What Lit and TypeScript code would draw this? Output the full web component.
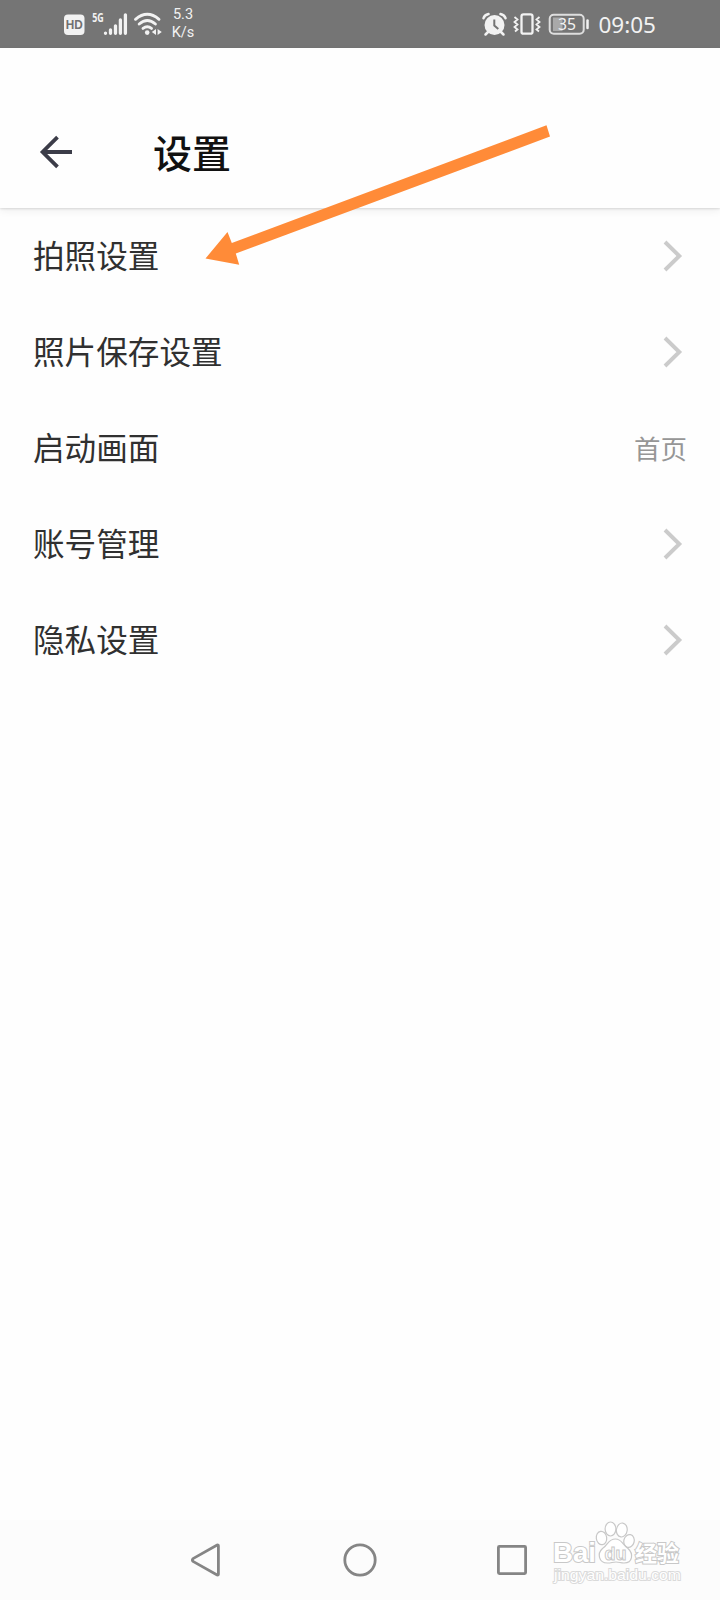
import { LitElement, html, css } from "lit";
import { customElement, property } from "lit/decorators.js";

interface Item {
  label: string;
  value?: string;
}

const ITEMS: Item[] = [
  { label: "拍照设置" },
  { label: "照片保存设置" },
  { label: "启动画面", value: "首页" },
  { label: "账号管理" },
  { label: "隐私设置" },
];

@customElement("status-bar")
class StatusBar extends LitElement {
  static styles = css`
    :host {
      display: flex;
      justify-content: space-between;
      height: 48px;
      box-sizing: border-box;
      padding: 0 64px 0 64px;
      background: #757575;
      color: #f2f2f2;
    }
    .group {
      display: flex;
      align-items: center;
    }
    svg {
      display: block;
    }
    .speed {
      display: flex;
      flex-direction: column;
      align-items: center;
      margin-left: 9px;
      width: 24px;
      font: 14.5px/18px Roboto, sans-serif;
    }
    .time {
      margin-left: 8px;
      font: 22.5px/48px "Noto Sans", sans-serif;
      padding-top: 2px;
    }
    .hd {
      font: 700 12.5px "Liberation Sans", sans-serif;
    }
    .net {
      font: 700 12.5px "Open Sans", sans-serif;
    }
    .level {
      font: 17px "Noto Sans", sans-serif;
    }
  `;
  render() {
    return html`
      <div class="group">
        <svg width="98" height="48" viewBox="64 0 98 48" fill="#f2f2f2">
          <rect x="64" y="14.5" width="20.5" height="20.5" rx="4" />
          <text class="hd" x="65.8" y="29.3" fill="#707070" textLength="17" lengthAdjust="spacingAndGlyphs">HD</text>
          <text class="net" x="92.3" y="22.3" textLength="11.5" lengthAdjust="spacingAndGlyphs">5G</text>
          <g stroke="#f2f2f2" stroke-width="3.3" stroke-linecap="round">
            <path d="M105.5 33.1v.2M110.5 30v3.3M115.500 25.800v7.500M120.400 20v13.300M125.400 14.800v18.500" />
          </g>
          <g fill="none" stroke="#f2f2f2" stroke-width="2.900" stroke-linecap="round">
            <path d="M135.500 19.300Q147.300 9.300 159 19.300M139.200 24Q147.300 17.200 155.400 24M143 28.400Q147.300 25.200 151.500 28.400" />
          </g>
          <circle cx="147.200" cy="32.600" r="2.300" />
          <path d="M156 29v6l-4.200-3zM157.600 29v6l4.200-3z" />
        </svg>
        <div class="speed"><span>5.3</span><span>K/s</span></div>
      </div>
      <div class="group">
        <svg width="108" height="48" viewBox="482 0 108 48" fill="none" stroke="#f2f2f2">
          <circle cx="494.500" cy="25" r="10" fill="#f2f2f2" stroke="none" />
          <path d="M483.500 18.200Q484.400 14.800 488.500 14M500.500 14Q504.500 14.800 505.500 18.200" stroke-width="2.500" stroke-linecap="round" />
          <path d="M488 32l-2.500 2.500M501 32l2.500 2.500" stroke-width="2.500" stroke-linecap="round" />
          <path d="M494.300 19.500v6l4 3.500" stroke="#757575" stroke-width="2" />
          <rect x="521.500" y="14.300" width="11" height="19.400" rx="2" stroke-width="2.300" />
          <path d="M514.500 17l3 2.500-3 2.500 3 2.500-3 2.500 3 2.500-2.500 2M539.500 17l-3 2.500 3 2.500-3 2.500 3 2.500-3 2.500 2.500 2" stroke-width="1.800" />
          <rect x="549.700" y="14.800" width="34" height="19" rx="4" stroke="#dedede" stroke-width="2" />
          <path d="M553 17.500h9.500v13.600h-9.500z" fill="#a9a9a9" stroke="none" />
          <path d="M587.500 20.500v7.500" stroke-width="2.500" stroke-linecap="round" />
          <text class="level" x="558" y="30.200" textLength="18" lengthAdjust="spacingAndGlyphs" fill="#f2f2f2" stroke="none">35</text>
        </svg>
        <span class="time">09:05</span>
      </div>
    `;
  }
}

@customElement("setting-row")
class SettingRow extends LitElement {
  @property() label = "";
  @property() value = "";
  static styles = css`
    :host {
      display: flex;
      align-items: center;
      justify-content: space-between;
      height: 96px;
      box-sizing: border-box;
      padding: 0 33px;
      font-family: "KaiTi", "STKaiti", "Noto Sans CJK SC", sans-serif;
    }
    .label {
      font-size: 31.6px;
      line-height: 48px;
      padding-bottom: 4px;
      color: #303030;
    }
    .value {
      font-size: 26.5px;
      line-height: 40px;
      color: #969696;
    }
    .chevron {
      display: block;
      margin-right: 4px;
    }
  `;
  render() {
    return html`
      <span class="label">${this.label}</span>
      ${this.value
        ? html`<span class="value">${this.value}</span>`
        : html`<svg class="chevron" width="20" height="32" viewBox="0 0 20 32" fill="none" stroke="#cbcbcb" stroke-width="3.900">
            <path d="M2 2 16.300 16 2 30" />
          </svg>`}
    `;
  }
}

@customElement("nav-bar")
class NavBar extends LitElement {
  static styles = css`
    :host {
      display: flex;
      align-items: center;
      height: 80px;
      box-sizing: border-box;
      padding-left: 190px;
      background: #fcfcfc;
    }
    .key {
      display: block;
      fill: none;
      stroke: #858585;
      stroke-width: 2.8;
      stroke-linejoin: round;
      margin-right: 118px;
    }
    .key.last {
      margin-right: 20px;
    }
    .mark {
      display: block;
      fill: #fff;
      stroke: #c8c8c8;
      stroke-width: 1.2;
    }
    .brand {
      font: 700 28px "Liberation Sans", sans-serif;
      paint-order: stroke;
      stroke-width: 2;
    }
    .cjk {
      font: 700 22px "Noto Sans CJK SC", sans-serif;
      paint-order: stroke;
      stroke-width: 2;
    }
    .du {
      font: 700 19px "Liberation Sans", sans-serif;
      stroke-width: 1;
    }
    .site {
      font: 14px "Liberation Sans", sans-serif;
      paint-order: stroke;
      stroke-width: 1.8;
      stroke: #dadada;
    }
  `;
  render() {
    return html`
      <svg class="key" width="34" height="40" viewBox="190 1540 34 40">
        <path d="M193 1558.600 217.200 1545q1.200-.4 1.200 1v28q0 1.400-1.200 1L193 1561.400q-1.200-1.400 0-2.800z" />
      </svg>
      <svg class="key" width="36" height="40" viewBox="342 1540 36 40">
        <circle cx="360" cy="1560" r="15.200" />
      </svg>
      <svg class="key last" width="34" height="40" viewBox="496 1540 34 40">
        <rect x="498.400" y="1546.400" width="27.200" height="27.200" rx="1" />
      </svg>
      <svg class="mark" width="140" height="80" viewBox="550 1520 140 80">
        <text class="brand" x="553" y="1561.500" textLength="43" lengthAdjust="spacingAndGlyphs">Bai</text>
        <ellipse cx="601.500" cy="1538" rx="5.200" ry="6.700" transform="rotate(-8 601.500 1538)" />
        <ellipse cx="610.500" cy="1529" rx="5.400" ry="7" />
        <ellipse cx="621.800" cy="1530" rx="5.400" ry="7" transform="rotate(8 621.800 1530)" />
        <ellipse cx="629" cy="1541" rx="5.200" ry="6.500" transform="rotate(14 629 1541)" />
        <path d="M615.500 1539c-7.500 0-7 5.500-13 9.500-5.500 5-4 14.500 5 14.500 4 0 5-1 8.500-1s4.500 1 8 1c9 0 9.500-9.500 4-14.500-6-4-6-9.500-12.500-9.500z" />
        <text class="du" x="604.500" y="1560" textLength="22" lengthAdjust="spacingAndGlyphs">du</text>
        <text class="cjk" x="635" y="1560.500" textLength="44" lengthAdjust="spacingAndGlyphs">经验</text>
        <text class="site" x="554" y="1579.500" textLength="127" lengthAdjust="spacingAndGlyphs">jingyan.baidu.com</text>
      </svg>
    `;
  }
}

@customElement("app-root")
class AppRoot extends LitElement {
  static styles = css`
    :host {
      display: flex;
      flex-direction: column;
      position: relative;
      width: 720px;
      height: 1600px;
      overflow: hidden;
      background: #fefefe;
    }
    .header {
      display: flex;
      align-items: center;
      height: 160px;
      box-sizing: border-box;
      padding: 48px 39px 0;
      gap: 80px;
      background: #fefefe;
      box-shadow: 0 1px 2px rgba(0, 0, 0, 0.12), 0 3px 8px rgba(0, 0, 0, 0.06);
    }
    .back {
      display: block;
    }
    .title {
      margin: 0;
      padding-bottom: 2px;
      font: 500 39px/56px "KaiTi", "STKaiti", "Noto Sans CJK SC", sans-serif;
      color: #111;
    }
    .list {
      flex: 1;
    }
    .pointer {
      position: absolute;
      left: 200px;
      top: 120px;
    }
  `;
  render() {
    return html`
      <status-bar></status-bar>
      <header class="header">
        <svg class="back" width="34" height="34" viewBox="39 135 34 34" fill="none" stroke="#3b3c48" stroke-width="3.800">
          <path d="M72 152H43M57.500 137.200 42.600 152l14.900 14.800" />
        </svg>
        <h1 class="title">设置</h1>
      </header>
      <main class="list">
        ${ITEMS.map((i) => html`<setting-row .label=${i.label} .value=${i.value ?? ""}></setting-row>`)}
      </main>
      <nav-bar></nav-bar>
      <svg class="pointer" width="360" height="160" viewBox="200 120 360 160" fill="#ff8b38">
        <path d="M205.500 258.500 227.500 232l4.300 11L546.500 125.300l3.500 11.200L235.800 253.500l3.400 11.200z" />
      </svg>
    `;
  }
}
